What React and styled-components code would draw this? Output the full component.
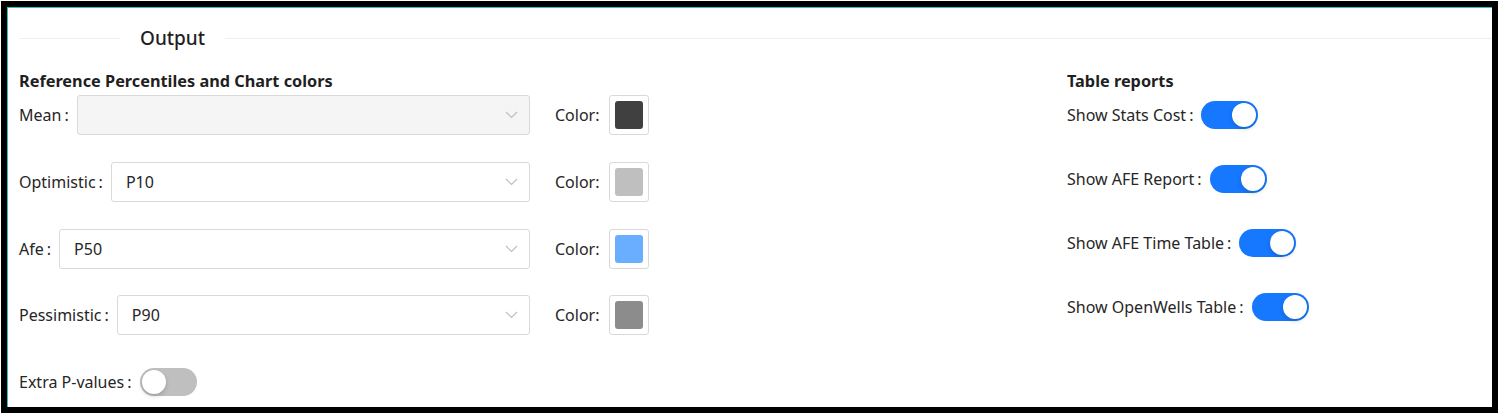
import React from "react";
import styled, { createGlobalStyle } from "styled-components";

const GlobalStyle = createGlobalStyle`
  body {
    margin: 0;
    background: #fff;
    font-family: "Noto Sans", "Open Sans", "Liberation Sans", sans-serif;
    color: #262626;
  }
`;

const percentiles = [
  { label: "Mean", value: "", disabled: true, color: "#404040" },
  { label: "Optimistic", value: "P10", color: "#bfbfbf" },
  { label: "Afe", value: "P50", color: "#69aeff" },
  { label: "Pessimistic", value: "P90", color: "#8c8c8c" },
];

const reports = [
  "Show Stats Cost",
  "Show AFE Report",
  "Show AFE Time Table",
  "Show OpenWells Table",
];

const Chevron = () => (
  <svg width="13" height="8" viewBox="0 0 13 8">
    <polyline points="1,1 6.5,6.5 12,1" fill="none" stroke="#bfbfbf" strokeWidth="1.2" />
  </svg>
);

const App = () => {
  return (
    <>
      <GlobalStyle />
      <Frame>
        <Divider>
          <DividerText>Output</DividerText>
        </Divider>
        <Columns>
          <Column>
            <Heading>Reference Percentiles and Chart colors</Heading>
            {percentiles.map((p) => (
              <Row key={p.label}>
                <Field>
                  <Label>{p.label}</Label>
                  <Select disabled={p.disabled}>
                    <span>{p.value}</span>
                    <Chevron />
                  </Select>
                </Field>
                <ColorLabel>Color:</ColorLabel>
                <Swatch>
                  <SwatchFill color={p.color} />
                </Swatch>
              </Row>
            ))}
            <Row>
              <Label>Extra P-values</Label>
              <Switch />
            </Row>
          </Column>
          <Column>
            <Heading>Table reports</Heading>
            {reports.map((r) => (
              <ReportRow key={r}>
                <Label>{r}</Label>
                <Switch on />
              </ReportRow>
            ))}
          </Column>
        </Columns>
      </Frame>
    </>
  );
};

const Frame = styled.div`
  box-sizing: border-box;
  margin: 1px 2px 3px 1px;
  height: 412px;
  border: 6px solid #000;
  box-shadow: inset 1px 1px 0 #1fc7c7;
  padding: 17px 0 0 12px;
  overflow: hidden;
`;

const Divider = styled.div`
  display: flex;
  align-items: center;
  height: 28px;
  &::before,
  &::after {
    content: "";
    height: 1px;
    background: #f0f0f0;
  }
  &::before {
    width: 101px;
  }
  &::after {
    flex: 1;
  }
`;

const DividerText = styled.span`
  padding: 0 20px;
  font-size: 19px;
  font-weight: 500;
  color: #1f1f1f;
`;

const Columns = styled.div`
  display: grid;
  grid-template-columns: 1048px 1fr;
  margin-top: 18px;
`;

const Column = styled.div`
  display: flex;
  flex-direction: column;
`;

const Heading = styled.div`
  font-size: 16.3px;
  font-weight: 700;
  line-height: 22px;
  color: #1f1f1f;
  margin-bottom: 3px;
`;

const Row = styled.div`
  display: flex;
  align-items: center;
  height: 40px;
  margin-bottom: 26.75px;
`;

const ReportRow = styled.div`
  display: flex;
  align-items: center;
  height: 40px;
  margin-bottom: 24px;
`;

const Field = styled.div`
  display: flex;
  align-items: center;
  width: 511px;
`;

const Label = styled.label`
  font-size: 16px;
  white-space: nowrap;
  &::after {
    content: ":";
    margin: 0 8px 0 3px;
  }
`;

const Select = styled.div`
  box-sizing: border-box;
  flex: 1;
  height: 40px;
  display: flex;
  align-items: center;
  justify-content: space-between;
  padding: 0 11px 0 14px;
  border: 1px solid #d9d9d9;
  border-radius: 3px;
  background: ${(p) => (p.disabled ? "#f5f5f5" : "#fff")};
  font-size: 16px;
  color: #262626;
`;

const ColorLabel = styled.span`
  font-size: 16px;
  margin: 0 9px 0 25px;
`;

const Swatch = styled.div`
  box-sizing: border-box;
  width: 40px;
  height: 40px;
  padding: 5px;
  border: 1px solid #d9d9d9;
  border-radius: 3px;
`;

const SwatchFill = styled.div`
  width: 100%;
  height: 100%;
  border-radius: 3px;
  background: ${(p) => p.color};
`;

const Switch = styled.span`
  position: relative;
  display: inline-block;
  width: 57px;
  height: 28px;
  border-radius: 14px;
  background: ${(p) => (p.on ? "#1677ff" : "#bfbfbf")};
  &::after {
    content: "";
    position: absolute;
    top: 2px;
    left: ${(p) => (p.on ? "31px" : "2px")};
    width: 24px;
    height: 24px;
    border-radius: 50%;
    background: #fff;
    box-shadow: 0 2px 4px rgba(0, 35, 11, 0.2);
  }
`;

export default App;
